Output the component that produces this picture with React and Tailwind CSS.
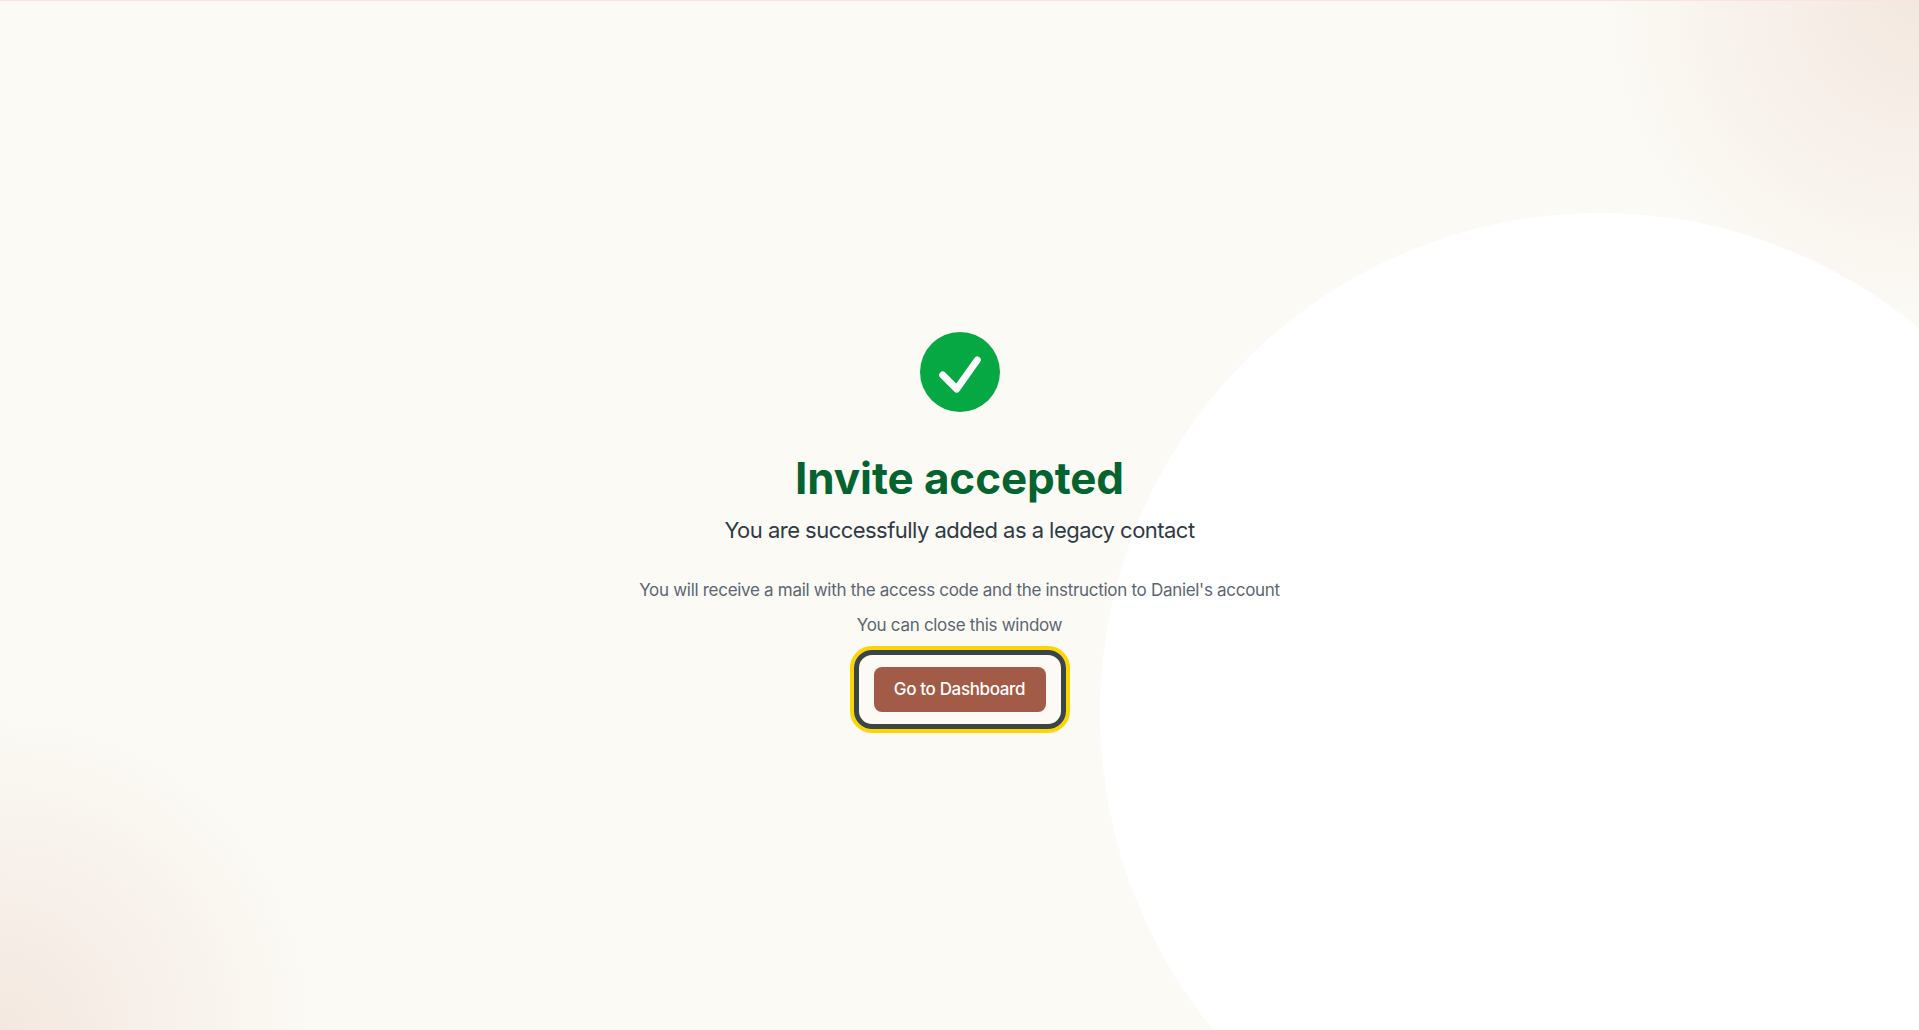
export default function App() {
  return (
    <div className="relative h-[1030px] w-full overflow-hidden bg-[#fbfaf5] border-t border-[#fde3e0] font-['Inter','Liberation_Sans',sans-serif]">
      <div className="absolute right-[-320px] top-[-320px] h-[640px] w-[640px] rounded-full bg-[radial-gradient(closest-side,#f3e8df_0%,#f5ece5_25%,#f8f1eb_55%,#faf6f0_78%,#fbfaf5_100%)]" />
      <div className="absolute bottom-[-320px] left-[-320px] h-[640px] w-[640px] rounded-full bg-[radial-gradient(closest-side,#f3e8df_0%,#f5ece5_25%,#f8f1eb_55%,#faf6f0_78%,#fbfaf5_100%)]" />
      <div className="absolute left-[1100px] top-[212px] h-[1000px] w-[1000px] rounded-full bg-white" />
      <div className="relative flex flex-col items-center pt-[331px] text-center">
        <div className="flex h-20 w-20 items-center justify-center rounded-full bg-[#06a843]">
          <svg viewBox="0 0 80 80" className="h-20 w-20" fill="none">
            <path d="M22.7 43L36.7 57L57.3 28" stroke="#fff" strokeWidth="7" strokeLinecap="round" strokeLinejoin="round" />
          </svg>
        </div>
        <h1 className="mt-[38px] text-[44px] font-bold leading-[56px] tracking-[-0.1px] text-[#04632f]">Invite accepted</h1>
        <p className="mt-[8px] text-[22px] leading-[32px] tracking-[-0.53px] text-[#2f3a45]">You are successfully added as a legacy contact</p>
        <p className="mt-[30px] text-[17px] leading-[28px] tracking-[-0.3px] text-[#5b6672]">You will receive a mail with the access code and the instruction to Daniel's account</p>
        <p className="mt-[7px] text-[17px] leading-[28px] tracking-[-0.3px] text-[#5b6672]">You can close this window</p>
        <div className="mt-[7px] rounded-[22px] border-4 border-[#ffd400]">
          <div className="rounded-[18px] border-[5px] border-[#3a4646] bg-[#fdfaf6] px-[15px] py-[12px]">
            <button className="block h-[45px] w-[172px] rounded-lg bg-[#a25b47] text-[17px] font-medium tracking-[-0.35px] text-white">Go to Dashboard</button>
          </div>
        </div>
      </div>
    </div>
  );
}
